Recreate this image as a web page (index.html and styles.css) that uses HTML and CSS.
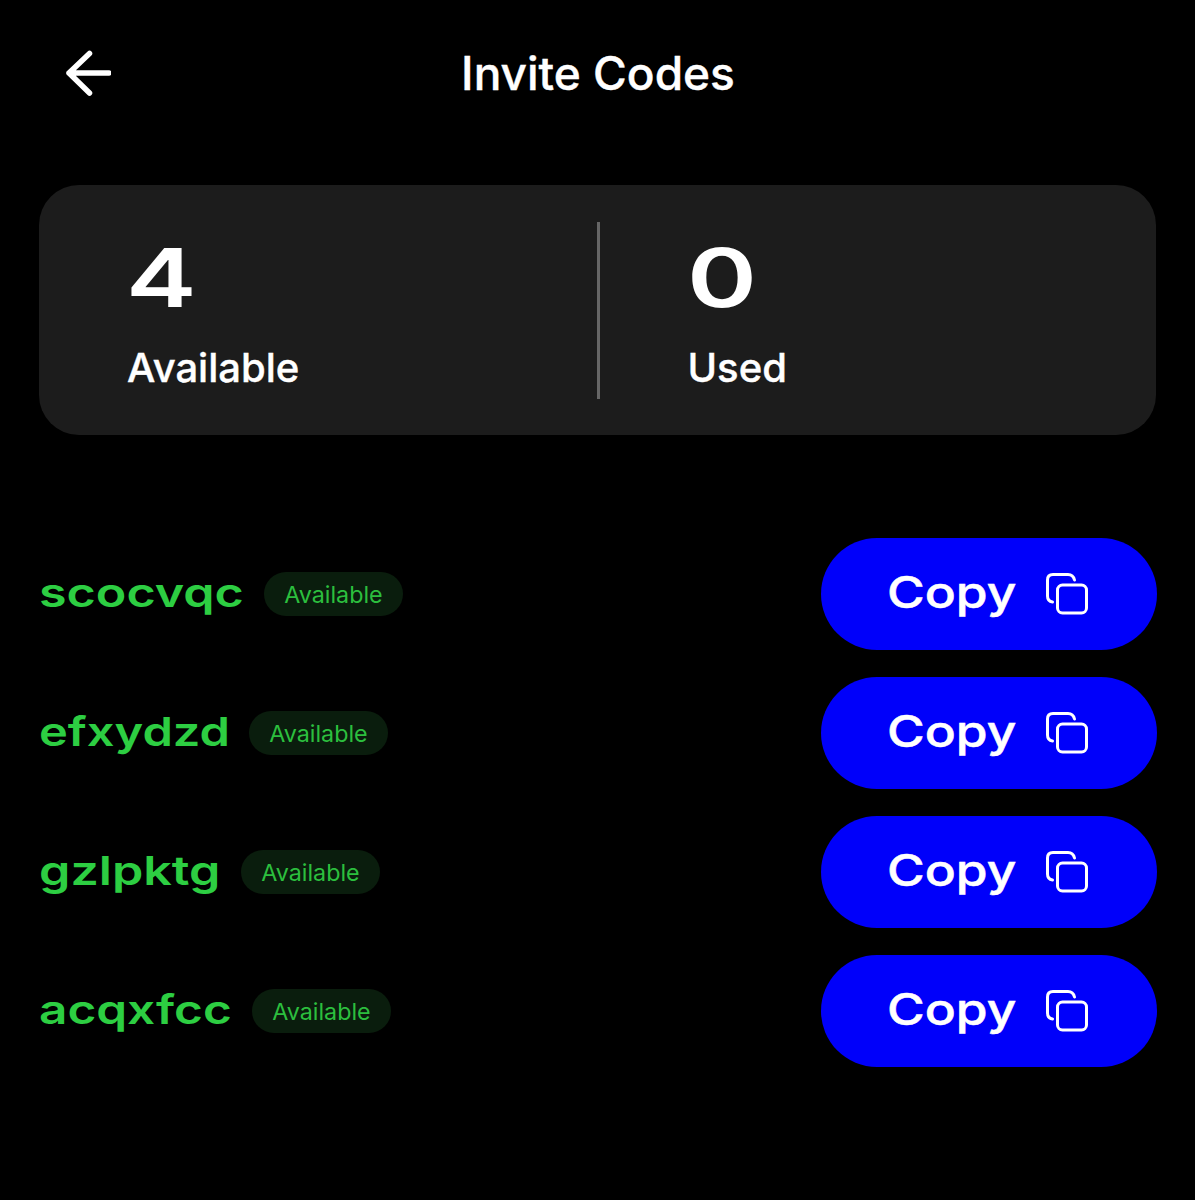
FILE: index.html
```html
<!DOCTYPE html>
<html lang="en">
<head>
  <meta charset="UTF-8" />
  <meta name="viewport" content="width=device-width, initial-scale=1.0"/>
  <title>Invite Codes</title>
  <link rel="stylesheet" href="styles.css">
</head>
<body>
  <svg class="defs" width="0" height="0">
    <symbol id="copy-icon" viewBox="0 0 42 42">
      <path d="M6.500 29 C3 28.500 1.500 26.500 1.500 23 V7 C1.500 3.500 3.500 1.500 7 1.500 H22 C25.500 1.500 27.500 3 28.500 7" />
      <rect x="11.500" y="12" width="29" height="28" rx="5" />
    </symbol>
  </svg>

  <header class="topbar">
    <a class="back" href="#" aria-label="Back">
      <svg width="46" height="46" viewBox="0 0 46 46"><path d="M44 23 H4 M24.500 3.500 L4 23 L24.500 43" /></svg>
    </a>
    <h1>Invite Codes</h1>
  </header>

  <section class="stats">
    <div class="stat">
      <span class="stat-num">4</span>
      <span class="stat-label">Available</span>
    </div>
    <div class="stat">
      <span class="stat-num">0</span>
      <span class="stat-label">Used</span>
    </div>
  </section>

  <ul class="codes">
    <li class="code-row">
      <div class="code-info">
        <span class="code" style="width: 204px; --sx: 1.255"><span>scocvqc</span></span>
        <span class="badge">Available</span>
      </div>
      <button class="copy"><span class="copy-text"><span>Copy</span></span><svg class="copy-svg"><use href="#copy-icon"/></svg></button>
    </li>
    <li class="code-row">
      <div class="code-info">
        <span class="code" style="width: 189px; --sx: 1.22"><span>efxydzd</span></span>
        <span class="badge">Available</span>
      </div>
      <button class="copy"><span class="copy-text"><span>Copy</span></span><svg class="copy-svg"><use href="#copy-icon"/></svg></button>
    </li>
    <li class="code-row">
      <div class="code-info">
        <span class="code" style="width: 181px; --sx: 1.255"><span>gzlpktg</span></span>
        <span class="badge">Available</span>
      </div>
      <button class="copy"><span class="copy-text"><span>Copy</span></span><svg class="copy-svg"><use href="#copy-icon"/></svg></button>
    </li>
    <li class="code-row">
      <div class="code-info">
        <span class="code" style="width: 192px; --sx: 1.237"><span>acqxfcc</span></span>
        <span class="badge">Available</span>
      </div>
      <button class="copy"><span class="copy-text"><span>Copy</span></span><svg class="copy-svg"><use href="#copy-icon"/></svg></button>
    </li>
  </ul>
</body>
</html>
```

FILE: styles.css
```css
* {
  box-sizing: border-box;
}
body {
  margin: 0;
  height: 1200px;
  padding: 0 38px 0 39px;
  background: #000;
  color: #fff;
  font-family: Inter, "Liberation Sans", sans-serif;
  overflow: hidden;
}
.defs {
  position: absolute;
}

/* header */
.topbar {
  position: relative;
  height: 147px;
  padding-bottom: 2px;
  display: flex;
  align-items: center;
  justify-content: center;
}
.topbar h1 {
  margin: 0;
  font-size: 46px;
  font-weight: 500;
  -webkit-text-stroke: 0.4px #fff;
}
.back {
  position: absolute;
  left: 26px;
  top: 50px;
  line-height: 0;
}
.back svg path {
  fill: none;
  stroke: #fff;
  stroke-width: 5.500;
  stroke-linecap: round;
  stroke-linejoin: round;
}

/* stats card */
.stats {
  margin: 38px 1px 0 0;
  height: 250px;
  display: grid;
  grid-template-columns: 1fr 1fr;
  align-items: center;
  background: #1c1c1c;
  border-radius: 40px;
  position: relative;
}
.stats::after {
  content: "";
  position: absolute;
  left: 558px;
  top: 37px;
  bottom: 36px;
  width: 3px;
  background: #666;
}
.stat {
  display: flex;
  flex-direction: column;
  align-items: flex-start;
  padding-left: 88px;
}
.stat + .stat {
  padding-left: 90px;
}
.stat-num {
  margin: 7px 0 0 -1px;
  font-weight: 600;
  font-size: 81px;
  line-height: 82px;
  transform: scaleX(1.31);
  transform-origin: left;
}
.stat-label {
  margin-top: 26px;
  font-size: 40px;
  font-weight: 500;
  line-height: 46px;
  -webkit-text-stroke: 0.4px #fff;
}

/* code list */
.codes {
  list-style: none;
  margin: 103px 0 0;
  padding: 0;
  display: flex;
  flex-direction: column;
  gap: 27.500px;
}
.code-row {
  display: flex;
  align-items: center;
  justify-content: space-between;
  height: 111.500px;
}
.code-info {
  display: flex;
  align-items: center;
  gap: 21px;
}
.code {
  display: block;
  white-space: nowrap;
  padding-bottom: 2px;
}
.code span {
  display: inline-block;
  font-weight: 600;
  font-size: 40px;
  color: #2dce42;
  transform: scaleX(var(--sx));
  transform-origin: left;
}
.badge {
  height: 44px;
  width: 139px;
  padding-top: 1px;
  display: flex;
  align-items: center;
  justify-content: center;
  border-radius: 22px;
  background: #0a1d0d;
  color: #2cbf3e;
  font-size: 23.300px;
}
.copy {
  width: 336px;
  height: 111.500px;
  padding: 0 0 0 66px;
  display: flex;
  align-items: center;
  border: 0;
  border-radius: 56px;
  background: #0000fa;
  color: #fff;
}
.copy-text {
  display: block;
  width: 159px;
  padding-bottom: 4px;
  white-space: nowrap;
  text-align: left;
  font-family: Inter, sans-serif;
}
.copy-text span {
  display: inline-block;
  font-size: 44px;
  font-weight: 500;
  -webkit-text-stroke: 0.5px #fff;
  transform: scaleX(1.17);
  transform-origin: left;
}
.copy-svg {
  width: 42px;
  height: 42px;
  fill: none;
  stroke: #fff;
  stroke-width: 3;
  stroke-linecap: round;
}
```
